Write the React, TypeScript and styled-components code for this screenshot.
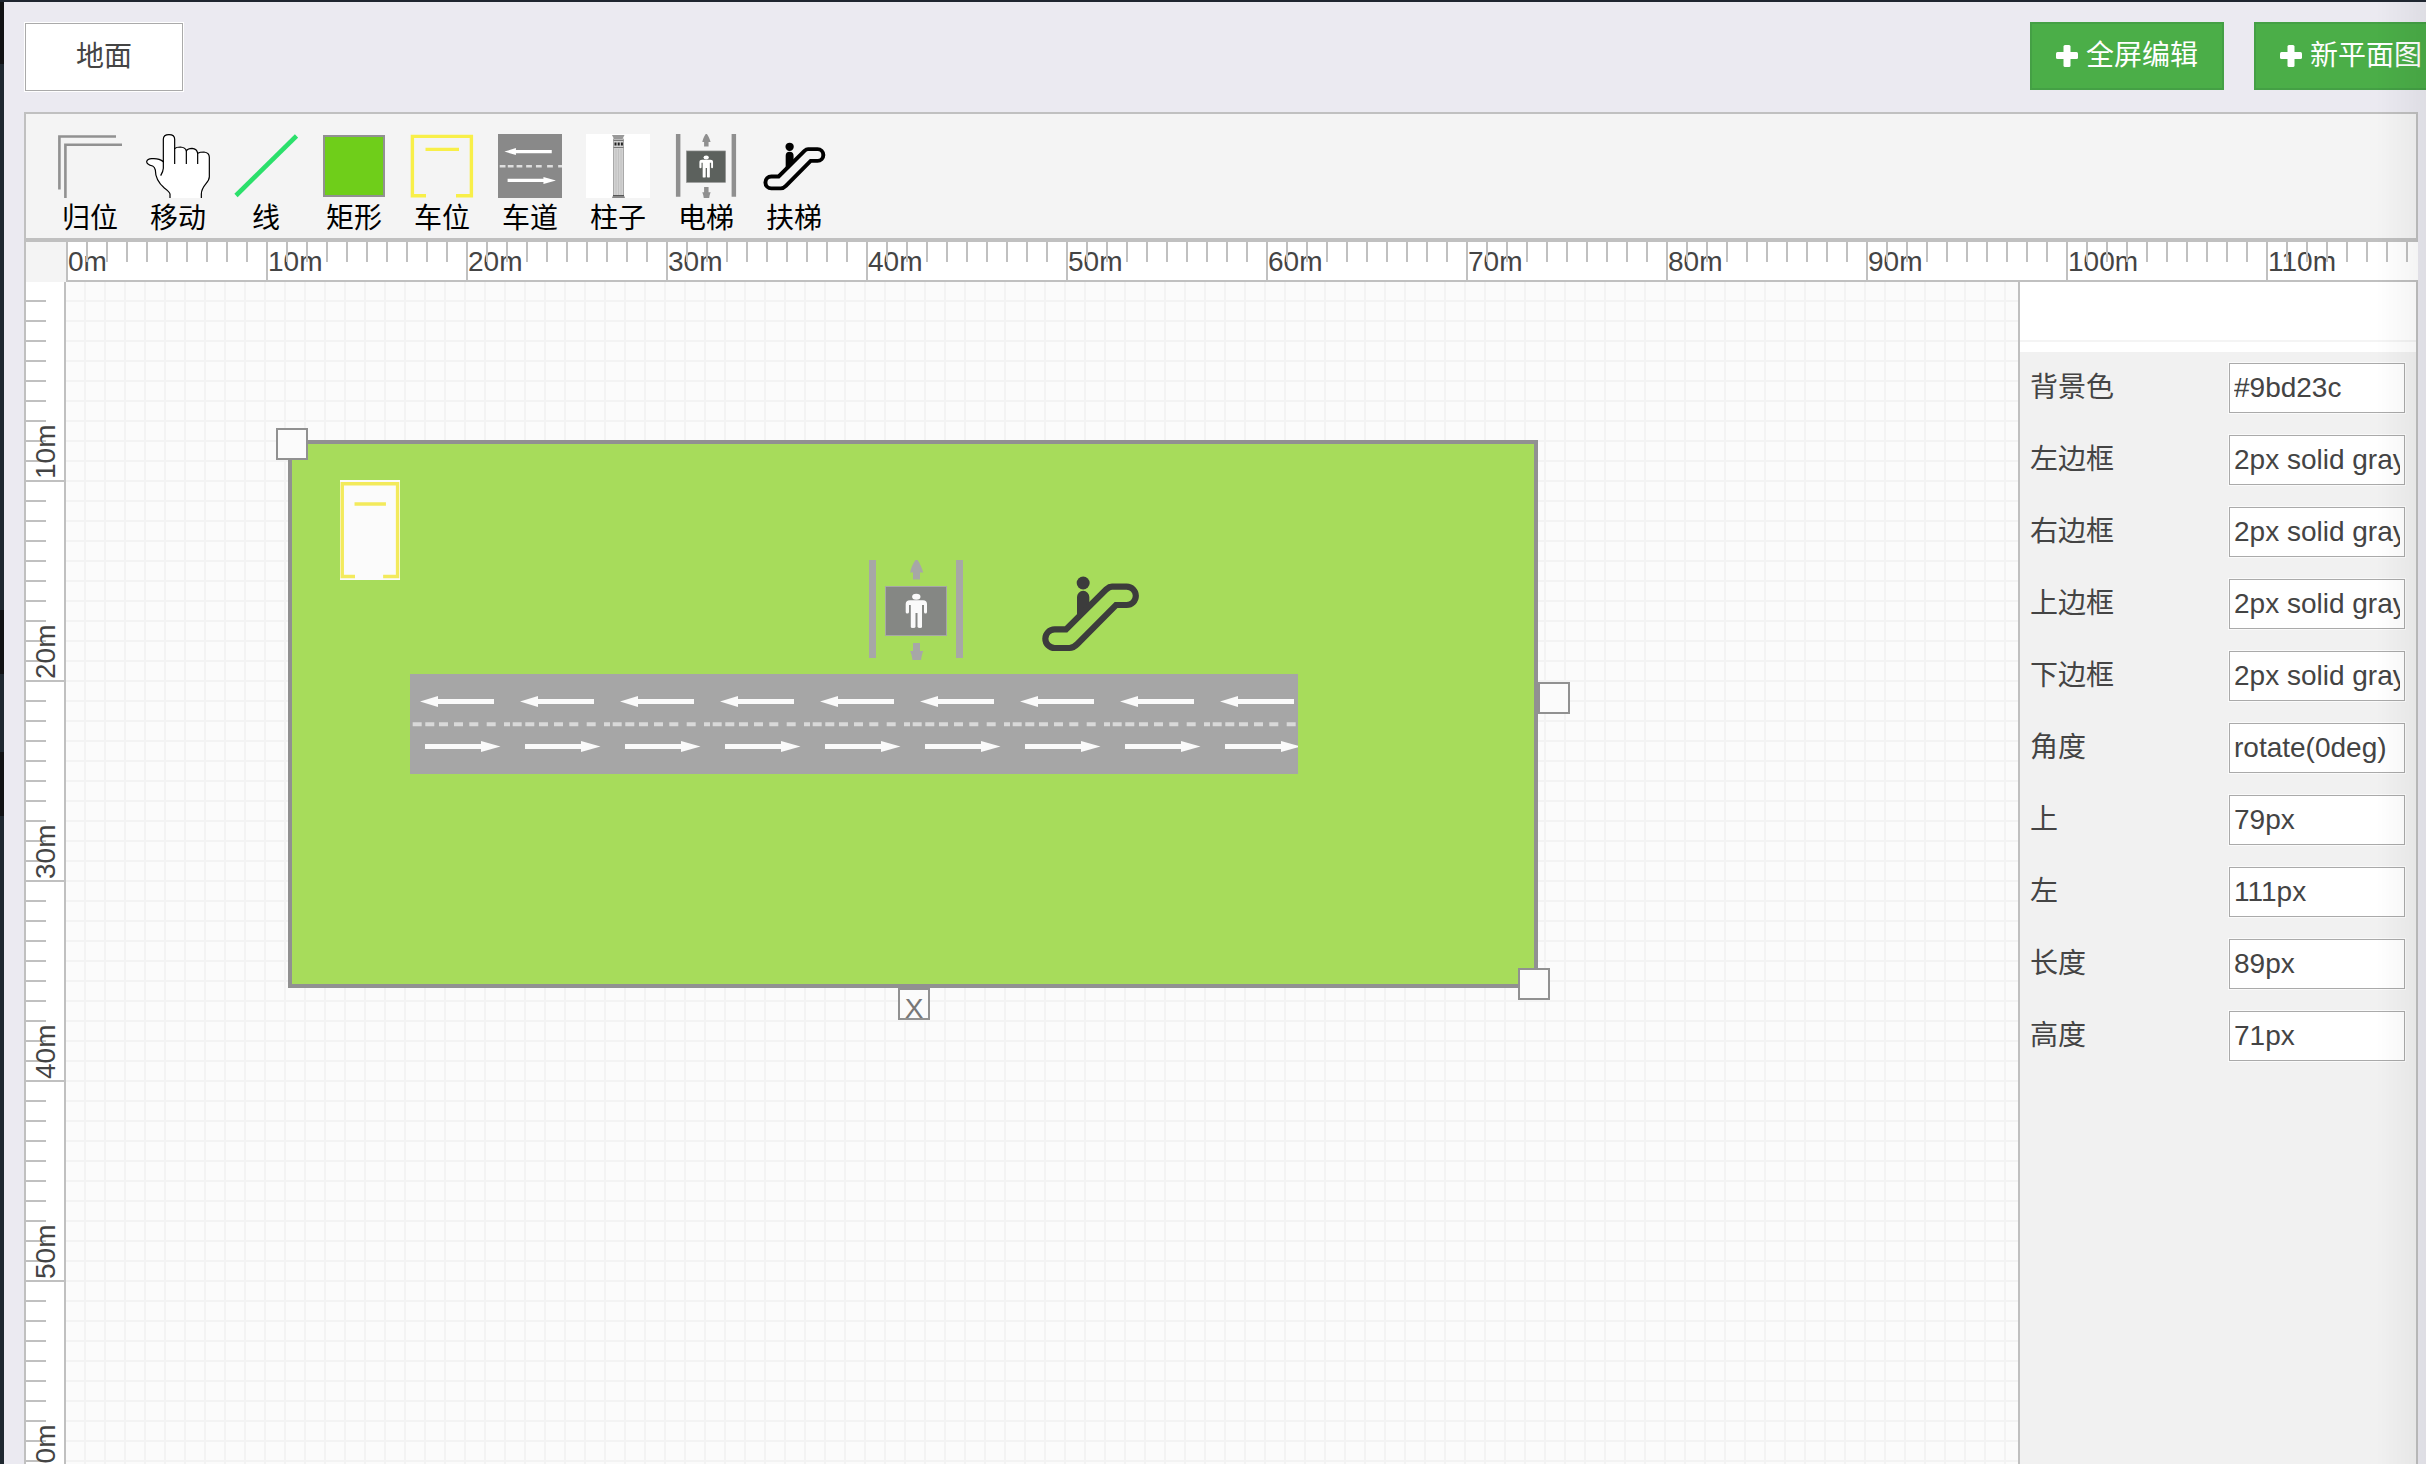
import React, { useState } from "react";
import styled, { createGlobalStyle } from "styled-components";

const font = `"Liberation Sans", Arial, "Noto Sans CJK SC", sans-serif`;
const line = "#c0c0c0";
const outline = "#919191";

const GlobalStyle = createGlobalStyle`
  *, *::before, *::after { box-sizing: border-box; }
  body { margin: 0; overflow: hidden; }
  button, input { font: inherit; color: inherit; }
`;

const Page = styled.div`
  height: 100vh;
  display: flex;
  overflow: hidden;
  border-top: 2px solid #1f2630;
  background: #ebeaf1;
  color: #444;
  font: 28px/40px ${font};
`;

const SideEdge = styled.div`
  flex: 0 0 4px;
  background: linear-gradient(
    #111214 0 62px, #1f2830 62px 608px, #111214 608px 672px,
    #1f2830 672px 750px, #111214 750px 814px, #1f2830 814px
  );
`;

const Content = styled.main`
  flex: 1;
  min-width: 0;
  display: flex;
  flex-direction: column;
  padding: 20px 8px 0 20px;
`;

const TopBar = styled.header`
  display: flex;
  justify-content: space-between;
  margin: 0 -30px 20px 0;
`;

const FloorTab = styled.button`
  width: 158px;
  height: 68px;
  margin: 1px;
  padding: 0;
  border: 1px solid #aaa;
  outline: 1px solid #fff;
  background: #fff;
`;

const Actions = styled.div`
  display: flex;
  gap: 30px;
`;

const ActionButton = styled.button`
  display: flex;
  align-items: center;
  gap: 8px;
  height: 68px;
  padding: 0 24px;
  border: 2px solid #44a045;
  background: #4bae48;
  color: #fff;
  white-space: nowrap;
`;

const Editor = styled.section`
  flex: 1;
  min-height: 0;
  display: flex;
  flex-direction: column;
  border-left: 2px solid ${line};
`;

const Toolbar = styled.div`
  display: flex;
  padding: 20px 20px 0;
  border: 2px solid ${line};
  border-left: 0;
  border-bottom-width: 4px;
  background: #f4f4f4;
`;

const ToolButton = styled.button`
  width: 88px;
  padding: 0;
  border: 0;
  background: none;
  color: #000;
  line-height: 38px;
  text-align: center;

  svg { display: block; margin: 0 auto 2px; }
`;

const RulerRow = styled.div`
  display: flex;
  height: 40px;
  background: #fff;
`;

const Corner = styled.div`
  flex: 0 0 40px;
  background: #f4f4f4;
`;

const HorizontalRuler = styled.div`
  flex: 1;
  min-width: 0;
  display: flex;
  overflow: hidden;
  border-bottom: 2px solid ${line};
`;

const HorizontalUnit = styled.div`
  flex: 0 0 200px;
  display: grid;
  height: 38px;
  line-height: 40px;
`;

const HorizontalLabel = styled.span`
  grid-area: 1 / 1;
  padding-left: 2px;
`;

const HorizontalTicks = styled.span`
  grid-area: 1 / 1;
  border-left: 2px solid ${line};
  background: repeating-linear-gradient(90deg, transparent 0 18px, ${line} 18px 20px) 0 0 / 190px 20px no-repeat;
  height: 38px;
`;

const Workspace = styled.div`
  flex: 1;
  min-height: 0;
  display: flex;
`;

const VerticalRuler = styled.div`
  flex: 0 0 40px;
  overflow: hidden;
  border-right: 2px solid ${line};
  background: #fff;
`;

const VerticalUnit = styled.div`
  display: grid;
  height: 200px;
`;

const VerticalLabel = styled.span`
  grid-area: 1 / 1;
  justify-self: start;
  writing-mode: vertical-rl;
  transform: rotate(180deg);
  padding-top: 3px;
  line-height: 40px;
`;

const VerticalTicks = styled.span`
  grid-area: 1 / 1;
  border-bottom: 2px solid ${line};
  background: repeating-linear-gradient(transparent 0 18px, ${line} 18px 20px) 0 0 / 20px 100% no-repeat;
`;

const Canvas = styled.div`
  position: relative;
  flex: 1;
  min-width: 0;
  overflow: hidden;
  background:
    repeating-linear-gradient(90deg, transparent 0 18px, #f3f3f3 18px 20px),
    repeating-linear-gradient(#fbfbfb 0 18px, #f3f3f3 18px 20px);
`;

interface Box {
  x: number;
  y: number;
  w: number;
  h: number;
}

const Node = styled.div<Box>`
  position: absolute;
  left: ${(p) => p.x}px;
  top: ${(p) => p.y}px;
  width: ${(p) => p.w}px;
  height: ${(p) => p.h}px;

  svg { display: block; }
`;

const Area = styled(Node)`
  border: 4px solid ${outline};
  background: #a7dc5b;
`;

const Handle = styled(Node).attrs({ as: "button", w: 32, h: 32 })`
  padding: 0;
  border: 2px solid ${outline};
  background: #fbfbfb;
  color: #777;
  line-height: 38px;
  text-align: center;
`;

const Panel = styled.aside`
  flex: 0 0 400px;
  border: solid ${line};
  border-width: 0 2px;
  background: #f1f1f1;
`;

const PanelHeader = styled.div`
  height: 70px;
  padding-top: 58px;
  background: #fff;

  &::after {
    content: "";
    display: block;
    height: 2px;
    background: #f4f4f4;
  }
`;

const Fields = styled.form`
  display: grid;
  gap: 22px;
  padding: 11px 11px 11px 10px;
`;

const Field = styled.div`
  display: flex;
  align-items: center;
  justify-content: space-between;
`;

const FieldInput = styled.input`
  width: 176px;
  height: 50px;
  padding: 0 4px;
  border: 1px solid #aaa;
  border-radius: 0;
  outline: 1px solid #fafafa;
  background: #fff;
`;

const EdgeShade = styled.div`
  position: fixed;
  inset: 2px 0 0 auto;
  width: 50px;
  background: linear-gradient(90deg, rgba(0, 0, 0, 0), rgba(0, 0, 0, 0.05));
  pointer-events: none;
`;

const PlusIcon = () => (
  <svg width="22" height="22" viewBox="0 0 22 22" fill="currentColor" aria-hidden="true">
    <rect x="0" y="7" width="22" height="7" rx="1.5" />
    <rect x="7.5" y="0" width="7" height="22" rx="1.5" />
  </svg>
);

const HomeIcon = () => (
  <svg width="64" height="64" fill="none" stroke={outline} strokeWidth="2.6">
    <path d="M1.4 55.5V2.5H58M7.4 64V10.8H64" />
  </svg>
);

const HandIcon = () => (
  <svg width="64" height="64" viewBox="18 18 192 192" fill="#fff" stroke="#000" strokeWidth="3.6">
    <path d="M90 212V198Q89 192 73 180Q46 157 46 126Q44 117 38 114Q20 109 20 101Q22 91 38 92Q58 91 70 101V34Q70 20 87 20Q104 20 104 34V62Q109 57 121 57Q136 58 139 68Q144 61 156 61Q171 62 173 76Q180 72 192 72Q208 74 208 88V146Q208 155 198 167Q184 184 184 198V212" />
    <path d="M104 60V108M139 66V108M173 74V108M70 99V121Q70 129 62 143" fill="none" />
  </svg>
);

const LineIcon = () => (
  <svg width="64" height="64">
    <path d="M2 61.5L62.5 2" stroke="#2be06b" strokeWidth="4.6" />
  </svg>
);

const RectIcon = () => (
  <svg width="64" height="64">
    <rect x="2" y="2" width="60" height="60" fill="#6fce1a" stroke={outline} strokeWidth="2" />
  </svg>
);

const ParkingSpot = ({ w = 64, h = 64, color = "#f8ef48", fill = "none" }) => (
  <svg width={w} height={h} viewBox="0 0 64 64" preserveAspectRatio="none">
    <rect width="64" height="64" fill={fill} />
    <g fill="none" stroke={color} strokeWidth="3.4">
      <path d="M16 61.8H2.4V2.4H61.4V61.8H46M15.5 15.4H49" vectorEffect="non-scaling-stroke" />
    </g>
  </svg>
);

const LaneTile = ({ mark = "#fff", dash = "#dedede" }) => (
  <>
    <path d="M10 27.5L28 22V25H84V30H28V33ZM90.500 72.500L71 67V70H15V75H71V78Z" fill={mark} />
    <path
      d="M2.700 50.300h9M15.300 50.300h9M29 50.300h9M44 50.300h9M59.300 50.300h9M76.700 50.300h9M94 50.300h6"
      stroke={dash}
      strokeWidth="4"
    />
  </>
);

const LaneIcon = () => (
  <svg width="64" height="64" viewBox="0 0 100 100">
    <rect width="100" height="100" fill="#898989" />
    <LaneTile />
  </svg>
);

const Road = ({ length }: { length: number }) => (
  <svg width={length} height="100">
    <rect width={length} height="100" fill="#a6a6a6" />
    {Array.from({ length: Math.ceil(length / 100) }, (_, i) => (
      <g key={i} transform={`translate(${i * 100} 0)`}>
        <LaneTile mark="#fafafa" dash="#d9d9d9" />
      </g>
    ))}
  </svg>
);

const ColumnIcon = () => (
  <svg width="64" height="64">
    <rect width="64" height="64" fill="#fff" />
    <path d="M26 1H38.500L36.500 5H28Z" fill="#999" />
    <rect x="27.500" y="5" width="10" height="57" fill="#d2d2d2" stroke="#999" strokeWidth="0.800" />
    <path d="M28.500 8.500h2v3h-2zM31.700 8.500h2v3h-2zM34.900 8.500h2v3h-2z" fill="#222" />
    <path d="M27.500 6.500h10M27.500 13.500h10" stroke="#777" />
    <path d="M30 15V61M32.500 15V61M35 15V61" stroke="#bcbcbc" strokeWidth="0.800" />
    <path d="M27 61.500H38L39 64H26Z" fill="#888" />
    <path d="M27 61.500h11" stroke="#444" strokeWidth="0.800" />
  </svg>
);

const Elevator = ({ size = 64, bar = "#8f8f8f", car = "#5c615d", person = "#fff" }) => (
  <svg width={size} height={size} viewBox="0 0 100 100">
    <g fill={bar}>
      <path d="M3 0h7v98H3zM90 0h7v98h-7z" />
      <path d="M50.500 -1C48 1 45 8 44.200 12.500H47V19.500H54V12.500H57.200C56 8 53 1 50.500 -1ZM47 83H54V91H57.200Q55.500 95 55 100H46.500Q46 95 44.200 91H47Z" />
    </g>
    <rect x="19.500" y="26.500" width="61" height="49" fill={car} stroke={bar} />
    <g fill={person}>
      <ellipse cx="50.300" cy="36.700" rx="4.200" ry="3" />
      <path d="M44 40.200H57Q61 40.200 61 44V52Q61 53.500 59.500 53.500T58 52V45H56V67Q56 68 54 68T51.500 67V53H49.500V67Q49.500 68 47 68T44.800 67V45H43V52Q43 53.500 41.300 53.500T39.700 52V44Q39.700 40.200 44 40.200Z" />
    </g>
  </svg>
);

const Escalator = ({ w = 64, h = 64, color = "#000" }) => (
  <svg width={w} height={h} viewBox="660 129 300 240">
    <circle cx="789.500" cy="159" r="19.500" fill={color} />
    <path d="M771 262V201a18.500 18.500 0 0 1 37 0V226Z" fill={color} />
    <path
      d="M704 298H738L859 178Q868 170 876 170H920a27.500 27.500 0 0 1 0 55H888L772 342Q760 354 748 354H704a28 28 0 0 1 0 -56Z"
      fill="none"
      stroke={color}
      strokeWidth="18.500"
    />
  </svg>
);

const tools: [string, React.ReactNode][] = [
  ["归位", <HomeIcon />],
  ["移动", <HandIcon />],
  ["线", <LineIcon />],
  ["矩形", <RectIcon />],
  ["车位", <ParkingSpot />],
  ["车道", <LaneIcon />],
  ["柱子", <ColumnIcon />],
  ["电梯", <Elevator />],
  ["扶梯", <Escalator />],
];

const initialFields: [string, string][] = [
  ["背景色", "#9bd23c"],
  ["左边框", "2px solid gray"],
  ["右边框", "2px solid gray"],
  ["上边框", "2px solid gray"],
  ["下边框", "2px solid gray"],
  ["角度", "rotate(0deg)"],
  ["上", "79px"],
  ["左", "111px"],
  ["长度", "89px"],
  ["高度", "71px"],
];

export default function App() {
  const [fields, setFields] = useState(initialFields);
  const update = (index: number, value: string) =>
    setFields((all) => all.map((f, i) => (i === index ? [f[0], value] : f)));

  return (
    <Page>
      <GlobalStyle />
      <SideEdge />
      <Content>
        <TopBar>
          <FloorTab type="button">地面</FloorTab>
          <Actions>
            <ActionButton type="button"><PlusIcon />全屏编辑</ActionButton>
            <ActionButton type="button"><PlusIcon />新平面图</ActionButton>
          </Actions>
        </TopBar>
        <Editor>
          <Toolbar>
            {tools.map(([name, icon]) => (
              <ToolButton key={name} type="button">
                {icon}
                {name}
              </ToolButton>
            ))}
          </Toolbar>
          <RulerRow>
            <Corner />
            <HorizontalRuler>
              {Array.from({ length: 12 }, (_, i) => (
                <HorizontalUnit key={i}>
                  <HorizontalLabel>{i * 10}m</HorizontalLabel>
                  <HorizontalTicks />
                </HorizontalUnit>
              ))}
            </HorizontalRuler>
          </RulerRow>
          <Workspace>
            <VerticalRuler>
              {Array.from({ length: 6 }, (_, i) => (
                <VerticalUnit key={i}>
                  <VerticalLabel>{(i + 1) * 10}m</VerticalLabel>
                  <VerticalTicks />
                </VerticalUnit>
              ))}
            </VerticalRuler>
            <Canvas>
              <Area x={222} y={158} w={1250} h={548} />
              <Node x={274} y={198} w={60} h={100}>
                <ParkingSpot w={60} h={100} color="#f3ea5c" fill="#fbfbfb" />
              </Node>
              <Node x={344} y={392} w={888} h={100}>
                <Road length={888} />
              </Node>
              <Node x={800} y={278} w={100} h={100}>
                <Elevator size={100} bar="#a7a7a7" car="#858784" person="#fafafa" />
              </Node>
              <Node x={974} y={291} w={100} h={80}>
                <Escalator w={100} h={80} color="#3c3c3c" />
              </Node>
              <Handle x={210} y={146} />
              <Handle x={1472} y={400} />
              <Handle x={1452} y={686} />
              <Handle x={832} y={706}>X</Handle>
            </Canvas>
            <Panel>
              <PanelHeader />
              <Fields>
                {fields.map(([name, value], i) => (
                  <Field key={name}>
                    <label htmlFor={`field-${i}`}>{name}</label>
                    <FieldInput
                      id={`field-${i}`}
                      type="text"
                      value={value}
                      onChange={(e) => update(i, e.target.value)}
                    />
                  </Field>
                ))}
              </Fields>
            </Panel>
          </Workspace>
        </Editor>
      </Content>
      <EdgeShade />
    </Page>
  );
}
